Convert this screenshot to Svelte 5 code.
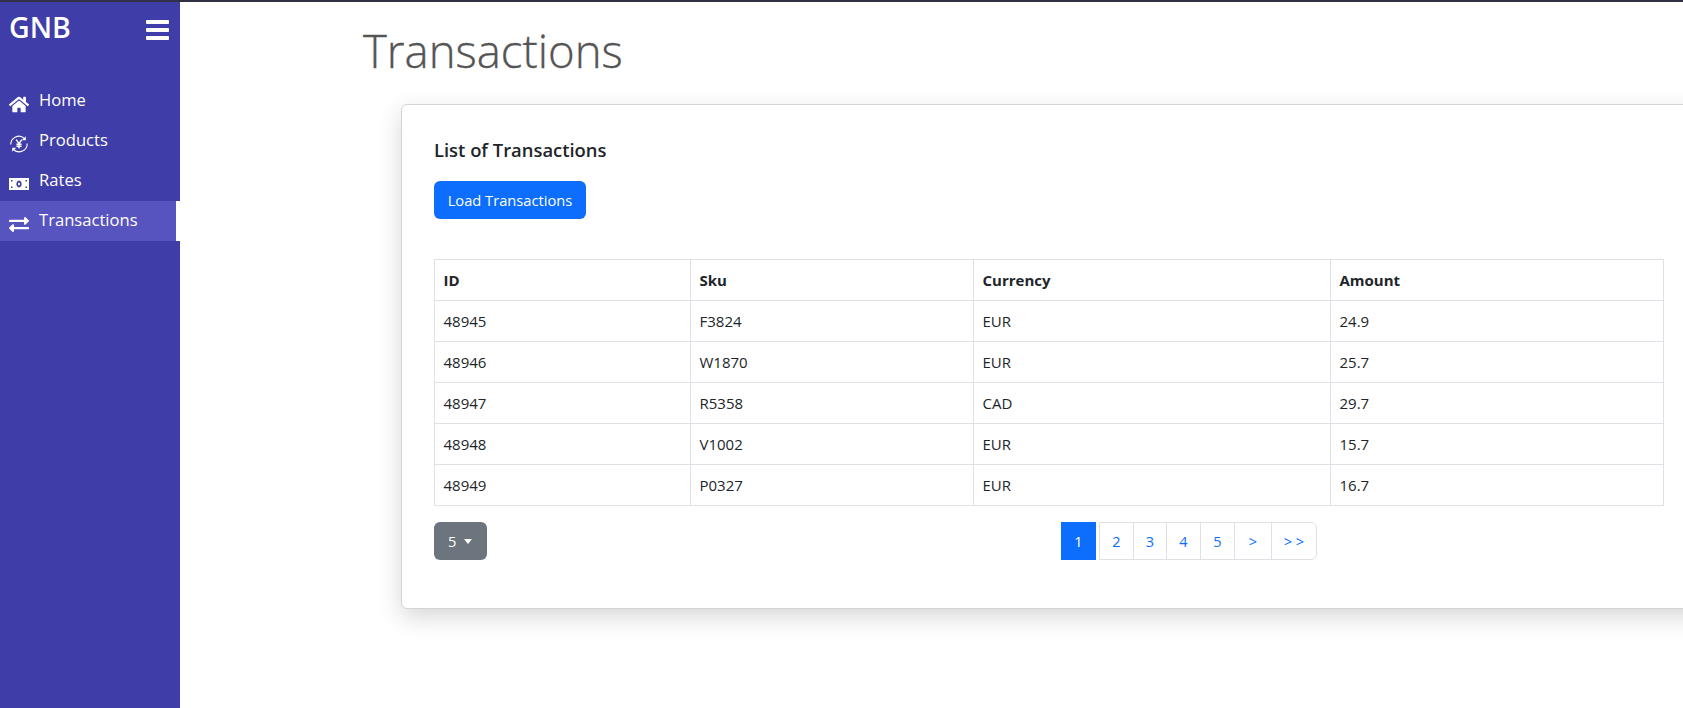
<script>
    const navItems = [
        { label: "Home", icon: "home" },
        { label: "Products", icon: "yen" },
        { label: "Rates", icon: "money" },
        { label: "Transactions", icon: "exchange", active: true }
    ];
    const transactions = [
        { id: 48945, sku: "F3824", currency: "EUR", amount: 24.9 },
        { id: 48946, sku: "W1870", currency: "EUR", amount: 25.7 },
        { id: 48947, sku: "R5358", currency: "CAD", amount: 29.7 },
        { id: 48948, sku: "V1002", currency: "EUR", amount: 15.7 },
        { id: 48949, sku: "P0327", currency: "EUR", amount: 16.7 }
    ];
    const pages = ["2", "3", "4", "5", ">", "> >"];
</script>

<div class="topline"></div>
<div class="layout">
    <aside class="sidebar">
        <div class="brand">
            <span class="logo">GNB</span>
            <button class="burger" aria-label="Menu"><span></span><span></span><span></span></button>
        </div>
        <nav>
            {#each navItems as item}
                <a class="nav-item" class:active={item.active} href="#top">
                    <span class="nav-icon">
                        {#if item.icon === "home"}
                            <svg viewBox="0 0 576 512" width="21" height="19"><path fill="#fff" d="M280.37 148.26L96 300.11V464a16 16 0 0 0 16 16l112.06-.29a16 16 0 0 0 15.92-16V368a16 16 0 0 1 16-16h64a16 16 0 0 1 16 16v95.64a16 16 0 0 0 16 16.05L464 480a16 16 0 0 0 16-16V300L295.67 148.26a12.19 12.19 0 0 0-15.3 0zM571.6 251.47L488 182.56V44.05a12 12 0 0 0-12-12h-56a12 12 0 0 0-12 12v72.61L318.47 43a48 48 0 0 0-61 0L4.34 251.47a12 12 0 0 0-1.6 16.9l25.5 31A12 12 0 0 0 45.15 301l235.22-193.74a12.19 12.19 0 0 1 15.3 0L530.9 301a12 12 0 0 0 16.9-1.6l25.5-31a12 12 0 0 0-1.7-16.93z"/></svg>
                        {:else if item.icon === "yen"}
                            <svg viewBox="0 0 20 20" width="20" height="20">
                                <path fill="none" stroke="#fff" stroke-width="1.1" d="M1.8 10.5a8 8 0 0 1 13.6-6M18.2 9.5a8 8 0 0 1-13.6 6"/>
                                <path fill="#fff" d="M16.8 2.2v4h-4zM3.2 17.8v-4h4z"/>
                                <path fill="none" stroke="#fff" stroke-width="1.4" d="M7.2 5.6l2.8 4 2.8-4M10 9.6v4.9M7.4 10.2h5.2M7.4 12.3h5.2"/>
                            </svg>
                        {:else if item.icon === "money"}
                            <svg viewBox="0 0 20 12" width="20" height="12"><path fill="#fff" fill-rule="evenodd" d="M0 0h20v12H0zM10 2.4a2.6 3.6 0 1 0 .01 0zM10 4.4a1 1.6 0 1 1-.01 0zM2 2v1.5h1.5V2zM16.5 2v1.5H18V2zM2 8.5V10h1.5V8.5zM16.5 8.5V10H18V8.5z"/></svg>
                        {:else}
                            <svg viewBox="0 56 512 400" width="20" height="15" preserveAspectRatio="none"><path fill="#fff" d="M0 168v-16c0-13.255 10.745-24 24-24h360V80c0-21.367 25.899-32.042 40.971-16.971l80 80c9.372 9.373 9.372 24.569 0 33.941l-80 80C409.956 272.982 384 262.456 384 240v-48H24c-13.255 0-24-10.745-24-24zm488 152H128v-48c0-21.314-25.862-32.08-40.971-16.971l-80 80c-9.372 9.373-9.372 24.569 0 33.941l80 80C102.057 464.984 128 454.437 128 432v-48h360c13.255 0 24-10.745 24-24v-16c0-13.255-10.745-24-24-24z"/></svg>
                        {/if}
                    </span>
                    <span class="nav-label">{item.label}</span>
                </a>
            {/each}
        </nav>
    </aside>

    <main class="content">
        <h1>Transactions</h1>
        <section class="card">
            <h2>List of Transactions</h2>
            <button class="btn btn-load">Load Transactions</button>
            <table>
                <thead>
                    <tr>
                        <th class="col-id">ID</th>
                        <th class="col-sku">Sku</th>
                        <th class="col-currency">Currency</th>
                        <th>Amount</th>
                    </tr>
                </thead>
                <tbody>
                    {#each transactions as row}
                        <tr>
                            <td>{row.id}</td>
                            <td>{row.sku}</td>
                            <td>{row.currency}</td>
                            <td>{row.amount}</td>
                        </tr>
                    {/each}
                </tbody>
            </table>
            <div class="table-footer">
                <button class="btn btn-size">5<span class="caret"></span></button>
                <div class="pagination">
                    <span class="page-current">1</span>
                    <div class="page-group">
                        {#each pages as page}
                            <a class="page-link" href="#top">{page}</a>
                        {/each}
                    </div>
                </div>
            </div>
        </section>
    </main>
</div>

<style>
    :global(body) {
        margin: 0;
        height: 708px;
        overflow: hidden;
        background: #fff;
        font-family: "Open Sans", "Noto Sans", sans-serif;
        font-size: 15px;
        color: #212529;
    }

    .topline {
        height: 2px;
        background: #2f2f45;
    }

    .layout {
        display: flex;
        height: 706px;
    }

    .sidebar {
        flex: 0 0 180px;
        background: #3f3da8;
        color: #fff;
    }

    .brand {
        display: flex;
        justify-content: space-between;
        align-items: flex-start;
        height: 79px;
        padding: 7px 11px 0 9px;
        box-sizing: border-box;
    }

    .logo {
        font-size: 28.5px;
        font-weight: 600;
        line-height: 36px;
    }

    .burger {
        display: flex;
        flex-direction: column;
        gap: 4px;
        width: 23px;
        margin-top: 11px;
        padding: 0;
        border: 0;
        background: none;
    }

    .burger span {
        height: 4px;
        background: #fff;
        border-radius: 1px;
    }

    .nav-item {
        display: flex;
        align-items: center;
        box-sizing: border-box;
        height: 40px;
        color: #fff;
        text-decoration: none;
        font-size: 16.6px;
    }

    .nav-item.active {
        background: #5753bf;
        border-right: 4px solid #fff;
    }

    .nav-icon {
        display: flex;
        justify-content: center;
        width: 20px;
        margin: 6px 10px 0 9px;
    }

    .nav-label {
        margin-top: -4px;
    }

    .content {
        flex: 1;
        min-width: 0;
        overflow: hidden;
    }

    h1 {
        margin: 19px 0 0 183px;
        font-size: 45.5px;
        font-weight: 300;
        line-height: 58px;
        color: #555;
        -webkit-text-stroke: 0.35px #555;
    }

    .card {
        width: 1360px;
        height: 505px;
        box-sizing: border-box;
        margin: 25px 0 0 221px;
        padding: 34px 32px 32px;
        background: #fff;
        border: 1px solid #d4d4d6;
        border-radius: 6px;
        box-shadow: 0 8px 24px rgba(0, 0, 0, 0.16);
    }

    h2 {
        margin: 0 0 20px;
        font-size: 18.4px;
        font-weight: 600;
        line-height: 22px;
    }

    .btn {
        height: 38px;
        padding: 0 13px;
        border: 0;
        border-radius: 6px;
        color: #fff;
        font: inherit;
        font-size: 14.7px;
        white-space: nowrap;
    }

    .btn-load {
        display: block;
        width: 152px;
        background: #0d6efd;
    }

    table {
        width: 1230px;
        margin-top: 40px;
        table-layout: fixed;
        border-collapse: collapse;
    }

    th,
    td {
        height: 40px;
        padding: 0 7.5px 0 8.5px;
        box-sizing: content-box;
        border: 1px solid #dee2e6;
        text-align: left;
    }

    th {
        font-weight: 700;
    }

    .col-id {
        width: 239px;
    }

    .col-sku {
        width: 266px;
    }

    .col-currency {
        width: 340px;
    }

    .table-footer {
        display: flex;
        margin-top: 16px;
    }

    .btn-size {
        display: flex;
        align-items: center;
        width: 53px;
        padding-left: 14px;
        background: #6c757d;
    }

    .caret {
        margin-left: 8px;
        border-top: 5px solid #fff;
        border-left: 4.5px solid transparent;
        border-right: 4.5px solid transparent;
    }

    .pagination {
        display: flex;
        gap: 3px;
        margin-left: 574px;
        height: 38px;
        font-size: 14.5px;
    }

    .page-current {
        display: flex;
        align-items: center;
        justify-content: center;
        width: 35px;
        background: #0d6efd;
        color: #fff;
    }

    .page-group {
        display: flex;
        border: 1px solid #dee2e6;
        border-radius: 0 6px 6px 0;
    }

    .page-link {
        display: flex;
        align-items: center;
        justify-content: center;
        box-sizing: border-box;
        width: 34px;
        color: #0d6efd;
        text-decoration: none;
        border-right: 1px solid #dee2e6;
    }

    .page-link:nth-child(2) {
        width: 33px;
    }

    .page-link:nth-child(5) {
        width: 37px;
    }

    .page-link:last-child {
        width: 44px;
        border-right: 0;
    }
</style>
